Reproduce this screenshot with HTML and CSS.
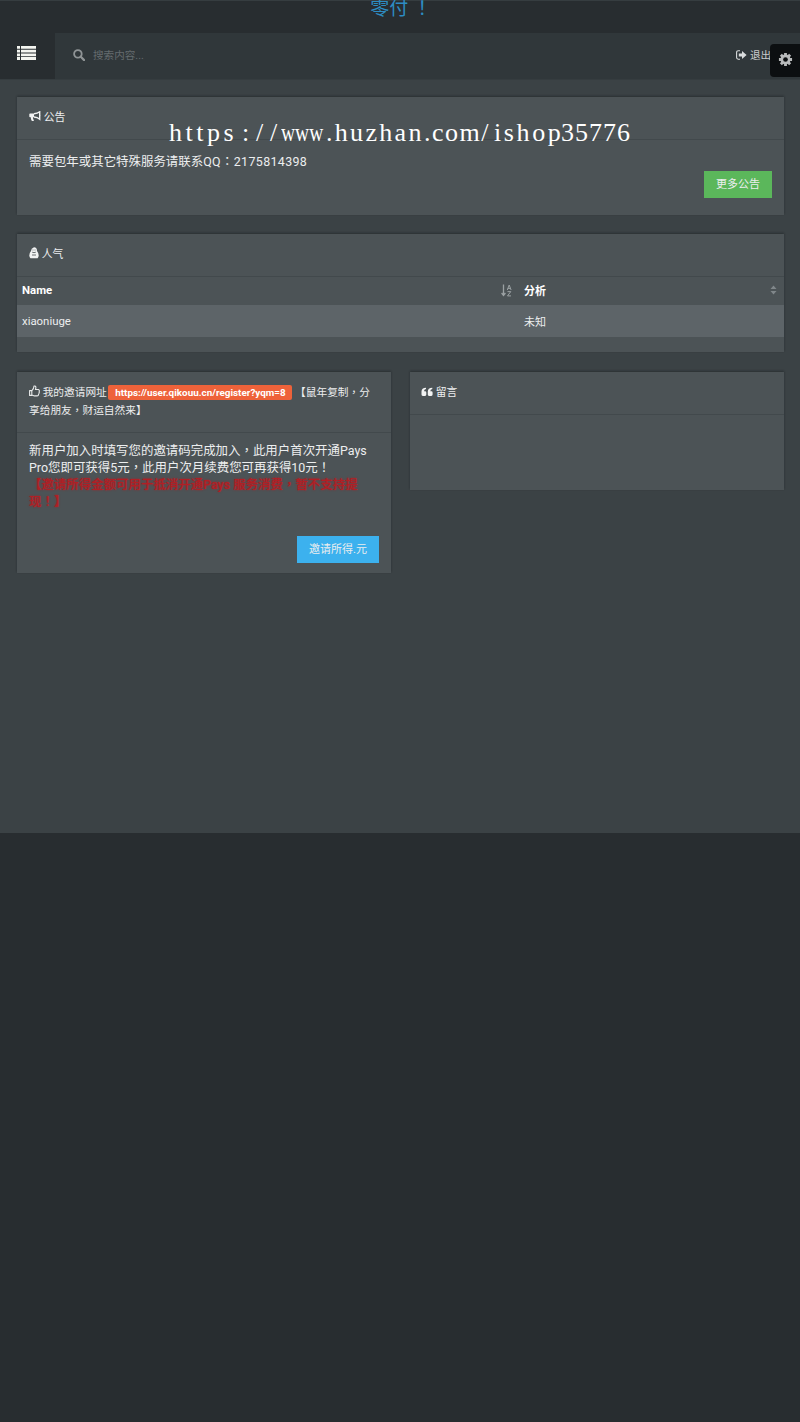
FILE: index.html
```html
<!DOCTYPE html>
<html lang="zh-CN">
<head>
<meta charset="utf-8">
<title>零付</title>
<link rel="stylesheet" href="styles.css">
</head>
<body>
<div class="brand"><span>零付 <i class="cp" lang="zh-TW">！</i></span></div>
<header class="topbar">
  <button class="toggle" aria-label="menu">
    <svg width="19" height="16" viewBox="0 0 19 16" fill="#f4f5f0"><path d="M0 1h3v2.8H0zM4 1h15v2.8H4zM0 4.7h3v2.8H0zM4 4.7h15v2.8H4zM0 8.4h3v2.8H0zM4 8.4h15v2.8H4zM0 12.1h3v2.9H0zM4 12.1h15v2.9H4z"/></svg>
  </button>
  <div class="search">
    <svg width="12" height="12" viewBox="0 0 12 12" fill="none" stroke="#8f9496"><circle cx="4.9" cy="4.9" r="3.8" stroke-width="1.8"/><path d="M7.8 7.8l3.3 3.3" stroke-width="2.2" stroke-linecap="round"/></svg>
    <span>搜索内容...</span>
  </div>
  <div class="logout">
    <svg width="11" height="10" viewBox="0 0 11 10" fill="#d8dbdc"><path d="M4 .8H2.2Q.6.8.6 2.4v5.2q0 1.6 1.6 1.6H4" fill="none" stroke="#d8dbdc" stroke-width="1.1"/><path d="M2.8 3.4H6V.9L10.6 5 6 9.1V6.6H2.8z"/></svg>
    <span>退出</span>
  </div>
  <div class="gear">
    <svg width="15" height="15" viewBox="0 0 16 16"><path d="M8 1v14M1 8h14M3.05 3.05l9.9 9.9M12.95 3.05l-9.9 9.9" stroke="#b9bbbc" stroke-width="3"/><circle cx="8" cy="8" r="5.3" fill="#b9bbbc"/><circle cx="8" cy="8" r="2.5" fill="#0c0f11"/></svg>
  </div>
</header>
<main class="content">
  <section class="card notice">
    <h2 class="head">
      <svg width="12" height="11" viewBox="0 0 12 11" fill="#f2f3f3"><path d="M.3 3.2Q.3 2.4 1.1 2.4H5v3.9H1.1Q.3 6.3.3 5.5zM1.8 6h2.1q-.2 2 1.1 3.4-.9 1-2.3.4Q1.7 8 1.8 6z"/><path d="M5 2.7Q8.4 2.6 10.7.8v7.4Q8.4 6.2 5 6" fill="none" stroke="#f2f3f3" stroke-width="1.4"/><path d="M10.7 3.4q1.2.9 0 2z"/></svg>
      公告</h2>
    <div class="body">
      <p>需要包年或其它特殊服务请联系<span class="num">QQ<i class="cp" lang="zh-TW">：</i>2175814398</span></p>
      <div class="actions"><button class="btn green">更多公告</button></div>
    </div>
  </section>
  <section class="card fame">
    <h2 class="head">
      <svg width="10" height="12" viewBox="0 0 10 12"><path d="M5 .3C7 .3 8 1.6 8 4q1.700 2 1.700 4.400Q9.600 10 8.600 11.300H1.400Q.4 10 .3 8.400.3 6 2 4 2 1.600 5 .3z" fill="#f2f3f3"/><path d="M3.200 5.200q1.800 1 3.600 0M3 8h4" fill="none" stroke="#5b6265" stroke-width=".9"/><path d="M3.600 3h.8M5.600 3h.8" stroke="#5b6265"/></svg>
      人气</h2>
    <div class="row th">
      <div class="cell first"><b>Name</b>
        <svg width="11" height="13" viewBox="0 0 11 13" fill="none" stroke="#9ba1a3"><path d="M2.500 .5v10M.6 9l1.900 2.500L4.400 9" stroke-width="1.300"/><path d="M6.300 6L8.200 1l1.900 5M6.900 4.400h2.600M6.500 7.600h3.300L6.500 11.900h3.500" stroke-width="1"/></svg>
      </div>
      <div class="cell"><b>分析</b>
        <svg width="7" height="10" viewBox="0 0 7 10" fill="#80878a"><path d="M3.500 .5L6.500 4h-6zM3.500 9.500L6.500 6h-6z"/></svg>
      </div>
    </div>
    <div class="row td"><div class="cell first">xiaoniuge</div><div class="cell">未知</div></div>
  </section>
  <div class="columns">
    <section class="card invite">
      <h2 class="head">
        <svg width="11" height="12" viewBox="0 0 11 12" fill="none" stroke="#e8eaea" stroke-width="1.100" stroke-linejoin="round"><path d="M.6 5.600h2.200v4.800H.6zM2.800 5.800Q4.800 4 5 1q1.900-.4 1.900 1.800L6.400 4.500h3q1.300.5.8 1.700.4.900-.2 1.700.2 1-.5 1.500 0 1.500-1.300 1.500H5.500L2.800 10"/></svg>
        我的邀请网址 <span class="label">https://user.qikouu.cn/register?yqm=8</span> 【鼠年复制<i class="cp" lang="zh-TW">，</i>分<br>享给朋友<i class="cp" lang="zh-TW">，</i>财运自然来】</h2>
      <div class="body">
        <p>新用户加入时填写您的邀请码完成加入<i class="cp" lang="zh-TW">，</i>此用户首次开通Pays<br>Pro您即可获得5元<i class="cp" lang="zh-TW">，</i>此用户次月续费您可再获得10元<i class="cp" lang="zh-TW">！</i></p>
        <p class="warn">【邀请所得金额可用于抵消开通Pays 服务消费<i class="cp" lang="zh-TW">，</i>暂不支持提<br>现<i class="cp" lang="zh-TW">！</i>】</p>
        <div class="actions"><button class="btn blue">邀请所得.元</button></div>
      </div>
    </section>
    <section class="card message">
      <h2 class="head">
        <svg width="12" height="10" viewBox="0 0 12 10" fill="#f2f3f3"><path id="q" d="M5 .7v1.300Q3 2.200 3 4.200h1.100q1.200 0 1.200 1.200v2.200q0 1.300-1.300 1.300H1.800Q.5 8.900.5 7.600V4.500Q.5.900 5 .7z"/><use href="#q" x="6.300"/></svg>
        留言</h2>
    </section>
  </div>
</main>
<div class="watermark"><span class="g4">https</span><span class="g5">://</span><span class="w">www</span><span class="g1">.huzhan</span><span class="g2">.com/</span><span class="g3">ishop</span><span class="g6">35776</span></div>
</body>
</html>
```
FILE: styles.css
```css
* { box-sizing: border-box; }
body {
  margin: 0;
  position: relative;
  height: 1422px;
  overflow: hidden;
  background: #282d30;
  color: #eceeef;
  font-family: Roboto, "Noto Sans CJK SC", sans-serif;
  font-size: 12.45px;
}
button { border: 0; padding: 0; font: inherit; color: inherit; }
p, h2 { margin: 0; font-weight: 400; }
svg { display: block; flex: none; }
.cp { font-style: normal; font-family: "Noto Sans CJK TC", sans-serif; }
.num { letter-spacing: .35px; }
.brand {
  height: 33px;
  border-top: 1px solid #363d40;
  text-align: center;
  font-size: 19px;
  line-height: 16px;
  color: #2d8cc2;
}
.brand span { position: relative; left: 1px; top: -2px; }
.topbar { display: flex; height: 46px; background: #30373a; align-items: center; }
.toggle {
  width: 55px;
  height: 46px;
  padding: 0 0 6px 17px;
  background: #282d30;
}
.search { display: flex; align-items: center; gap: 8px; margin-left: 18px; padding-bottom: 3px; color: #646b6e; font-size: 10.6px; flex: 1; }
.logout { display: flex; align-items: center; gap: 3px; width: 34px; overflow: hidden; white-space: nowrap; padding-bottom: 3px; font-size: 10.6px; color: #c8cbcc; }
.gear {
  width: 30px;
  height: 33px;
  margin-top: 8px;
  padding: 8px 0 0 8px;
  border-radius: 4px 0 0 4px;
  background: #0c0f11;
}
.content { height: 754px; padding: 18px 16px 0 17px; background: #3b4245; border-top: 1px solid #353c3f; }
.card {
  background: #4c5356;
  margin-bottom: 19px;
  box-shadow: 0 -1px 2px rgba(20, 26, 29, .45);
  white-space: nowrap;
}
.head {
  height: 43px;
  padding: 11px 12px 0;
  border-bottom: 1px solid #42494c;
  font-size: 10.8px;
  line-height: 20px;
}
.head svg { display: inline-block; vertical-align: -1px; }
.body { padding: 12px 12px 0; line-height: 17px; }
.actions { display: flex; justify-content: flex-end; }
.btn { height: 27px; padding-bottom: 1px; font-size: 11px; }
.green { width: 68px; margin-top: 1px; background: #5bb75b; }
.blue { width: 82px; margin-top: 26px; background: #3cb1ee; }
.notice { height: 118px; margin-top: -1px; }
.notice .body { padding-top: 13px; line-height: 17px; }
.fame { height: 118px; margin-bottom: 20px; }
.row { display: grid; grid-template-columns: 502px 1fr; font-size: 11px; }
.first { font-size: 11.4px; }
.cell { display: flex; align-items: center; justify-content: space-between; padding: 0 7px 2px 5px; }
.td .cell { padding-bottom: 1px; }
.th { height: 28px; color: #fff; }
.td { height: 32px; background: #5d6468; }
.columns { display: grid; grid-template-columns: 374px 374px; justify-content: space-between; align-items: start; }
.invite { height: 201px; }
.invite .head { height: 61px; padding-top: 11px; line-height: 17px; font-size: 10.7px; }
.invite .body { padding-top: 9px; }
.label {
  display: inline-block;
  width: 184px;
  height: 15px;
  margin: 0 0 0 -1px;
  border-radius: 2px;
  background: #ee623a;
  color: #fff;
  font-size: 9.9px;
  font-weight: 700;
  line-height: 15px;
  text-align: center;
}
.warn { color: #b01f25; text-shadow: 0 0 2px #b01f25; font-weight: 500; line-height: 16px; }
.message { height: 118px; }
.message .head { padding-left: 11px; }
.watermark {
  position: absolute;
  left: 169px;
  top: 116px;
  display: flex;
  font: 26px/34px "Liberation Serif", serif;
  color: #fff;
  white-space: nowrap;
}
.watermark span { width: 70px; }
.watermark .g4 { letter-spacing: 3.500px; }
.watermark .g5 { width: 42px; letter-spacing: 6.800px; padding-left: 3px; }
.watermark .w { width: 42px; transform: scaleX(.75); transform-origin: 0 0; }
.watermark .g1 { width: 98px; letter-spacing: 2.300px; padding-left: 3px; }
.watermark .g2 { letter-spacing: 1.500px; padding-left: 3px; }
.watermark .g3 { letter-spacing: 2.600px; padding-left: 3px; }
.watermark .g6 { letter-spacing: 1px; }
```
